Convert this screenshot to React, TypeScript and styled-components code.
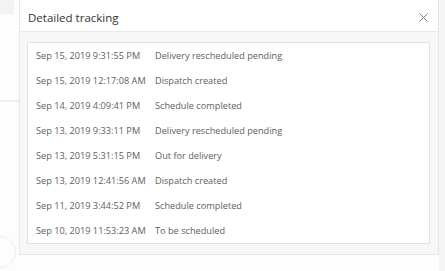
import React from "react";
import styled, { createGlobalStyle } from "styled-components";

const GlobalStyle = createGlobalStyle`
    html, body {
        margin: 0;
        padding: 0;
        background: #ffffff;
        font-family: "Open Sans", "Liberation Sans", sans-serif;
    }
`;

interface TrackingEvent {
    date: string;
    status: string;
}

const events: Array<TrackingEvent> = [
    { date: "Sep 15, 2019 9:31:55 PM", status: "Delivery rescheduled pending" },
    { date: "Sep 15, 2019 12:17:08 AM", status: "Dispatch created" },
    { date: "Sep 14, 2019 4:09:41 PM", status: "Schedule completed" },
    { date: "Sep 13, 2019 9:33:11 PM", status: "Delivery rescheduled pending" },
    { date: "Sep 13, 2019 5:31:15 PM", status: "Out for delivery" },
    { date: "Sep 13, 2019 12:41:56 AM", status: "Dispatch created" },
    { date: "Sep 11, 2019 3:44:52 PM", status: "Schedule completed" },
    { date: "Sep 10, 2019 11:53:23 AM", status: "To be scheduled" },
];

const Page = styled.div`
    position: relative;
    width: 445px;
    height: 271px;
    overflow: hidden;
    display: flex;
    align-items: flex-start;
    padding-left: 19px;
    box-sizing: border-box;
    background: #fdfdfd;
`;

const FaintBar = styled.div`
    position: absolute;
    left: 0;
    top: 0;
    width: 14px;
    height: 14px;
    background: #f3f3f3;
`;

const GreenLine = styled.div`
    position: absolute;
    left: 0;
    top: 100px;
    width: 20px;
    height: 2px;
    background: #e8f4e8;
`;

const FaintCircle = styled.div`
    position: absolute;
    left: -16px;
    top: 236px;
    width: 30px;
    height: 30px;
    border-radius: 50%;
    border: 1px solid #eeeeee;
`;

const RightStrip = styled.div`
    position: absolute;
    right: 0;
    top: 0;
    width: 6px;
    height: 100%;
    background: #f5f5f5;
`;

const Modal = styled.div`
    position: relative;
    z-index: 1;
    width: 420px;
    background: #ffffff;
    border: 1px solid #e6e6e6;
    border-top: none;
    box-sizing: border-box;
    display: flex;
    flex-direction: column;
`;

const Header = styled.div`
    height: 31px;
    display: flex;
    align-items: center;
    justify-content: space-between;
    padding: 3px 10px 0 8px;
    box-sizing: border-box;
`;

const Title = styled.h4`
    margin: 0;
    font-size: 11.5px;
    font-weight: 400;
    color: #333333;
`;

const Close = styled.svg`
    width: 9px;
    height: 9px;
    stroke: #7a7a7a;
    stroke-width: 1;
    fill: none;
`;

const Body = styled.div`
    background: #f7f7f7;
    border-top: 1px solid #ebebeb;
    padding: 10px 8px 10px 7px;
`;

const List = styled.div`
    background: #ffffff;
    border: 1px solid #e2e2e2;
    padding: 0 8px;
`;

const Row = styled.div`
    height: 25px;
    display: flex;
    align-items: center;
    font-size: 9.2px;
    color: #5e5e5e;
    white-space: nowrap;
`;

const DateCell = styled.span`
    width: 119px;
    flex: none;
`;

const StatusCell = styled.span`
    flex: 1;
`;

export default function App() {
    return <>
        <GlobalStyle />
        <Page>
            <FaintBar />
            <GreenLine />
            <FaintCircle />
            <RightStrip />
            <Modal>
                <Header>
                    <Title>Detailed tracking</Title>
                    <Close viewBox="0 0 9 9">
                        <path d="M0.5 0.5 L8.5 8.5 M8.5 0.5 L0.5 8.5" />
                    </Close>
                </Header>
                <Body>
                    <List>
                        {events.map((event: TrackingEvent, index: number) =>
                            <Row key={index}>
                                <DateCell>{event.date}</DateCell>
                                <StatusCell>{event.status}</StatusCell>
                            </Row>
                        )}
                    </List>
                </Body>
            </Modal>
        </Page>
    </>;
}
